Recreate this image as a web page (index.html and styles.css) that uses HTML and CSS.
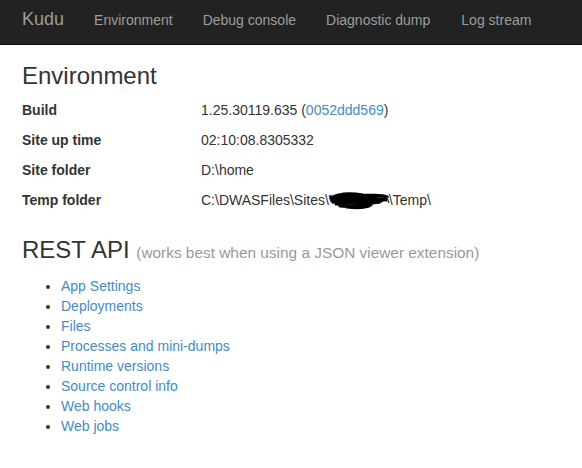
FILE: index.html
```html
<!DOCTYPE html>
<html>
<head>
<meta charset="utf-8">
<title>Kudu</title>
<link rel="stylesheet" href="styles.css">
</head>
<body>
<nav class="navbar">
  <a class="brand" href="#">Kudu</a>
  <ul class="nav">
    <li><a href="#">Environment</a></li>
    <li><a href="#">Debug console</a></li>
    <li><a href="#">Diagnostic dump</a></li>
    <li><a href="#">Log stream</a></li>
  </ul>
</nav>
<main class="container">
  <h3 class="heading env-heading">Environment</h3>
  <div class="info">
    <div class="row"><div class="label">Build</div><div class="value">1.25.30119.635 (<a href="#">0052ddd569</a>)</div></div>
    <div class="row"><div class="label">Site up time</div><div class="value">02:10:08.8305332</div></div>
    <div class="row"><div class="label">Site folder</div><div class="value">D:\home</div></div>
    <div class="row"><div class="label">Temp folder</div><div class="value">C:\DWASFiles\Sites\<span class="redacted"><svg width="64" height="20" viewBox="0 0 64 20"><path d="M3 5 L5 12" stroke="#1a3fd0" stroke-width="3" fill="none"/><path d="M4 8 C12 3, 24 3, 36 5 C46 6, 54 4, 60 7 M5 10 C15 6, 27 7, 39 8 C49 9, 55 8, 59 10 M6 12 C16 9, 28 10, 40 11 C48 12, 55 11, 58 9 M9 14 C19 12, 31 13, 43 13 C50 13, 55 12, 54 10 M13 16 C23 17, 33 16, 44 15 M20 17 C28 18, 36 18, 42 16" stroke="#000" stroke-width="3.2" fill="none" stroke-linecap="round"/><path d="M8 7 C18 5, 32 5, 50 7 M10 12 C22 11, 36 12, 50 11" stroke="#000" stroke-width="3.5" fill="none"/><path d="M60 7 L62 13" stroke="#333" stroke-width="1.2" fill="none"/></svg></span>\Temp\</div></div>
  </div>
  <h3 class="heading api-heading">REST API <small>(works best when using a JSON viewer extension)</small></h3>
  <ul class="links">
    <li><a href="#">App Settings</a></li>
    <li><a href="#">Deployments</a></li>
    <li><a href="#">Files</a></li>
    <li><a href="#">Processes and mini-dumps</a></li>
    <li><a href="#">Runtime versions</a></li>
    <li><a href="#">Source control info</a></li>
    <li><a href="#">Web hooks</a></li>
    <li><a href="#">Web jobs</a></li>
  </ul>
</main>
</body>
</html>
```
FILE: styles.css
```css
* { box-sizing: border-box; }
html, body { margin: 0; padding: 0; }
body {
  font-family: "Liberation Sans", Arial, sans-serif;
  font-size: 14px;
  line-height: 20px;
  color: #333;
  background: #fff;
}
a { color: #428bca; text-decoration: none; }

.navbar {
  display: flex;
  align-items: flex-start;
  height: 45px;
  background: #222;
  border-bottom: 1px solid #080808;
  padding-left: 7px;
}
.brand {
  font-size: 18px;
  line-height: 20px;
  color: #9d9d9d;
  padding: 9px 15px 0 15px;
}
.nav {
  display: flex;
  list-style: none;
  margin: 0;
  padding: 0;
}
.nav a {
  display: block;
  color: #9d9d9d;
  padding: 10px 15px 0 15px;
  line-height: 20px;
}
.nav li:nth-child(4) a { padding-left: 16px; }

.container { padding: 0 22px; }

.heading {
  font-size: 24px;
  line-height: 26.4px;
  font-weight: 500;
  margin: 0;
  color: #333;
}
.env-heading { margin-top: 18px; margin-bottom: 6px; }
.api-heading { margin-top: 22px; margin-bottom: 9px; }
.heading small {
  font-size: 15.4px;
  color: #999;
  font-weight: normal;
}

.info { display: flex; flex-direction: column; }
.row { display: flex; padding: 5px 0; }
.label { width: 179px; font-weight: bold; }
.value { flex: 1; }

.redacted {
  display: inline-block;
  width: 62px;
  height: 20px;
  margin-left: -2px;
  vertical-align: top;
}
.redacted svg { display: block; }

.links {
  margin: 0;
  padding-left: 39px;
}
```
